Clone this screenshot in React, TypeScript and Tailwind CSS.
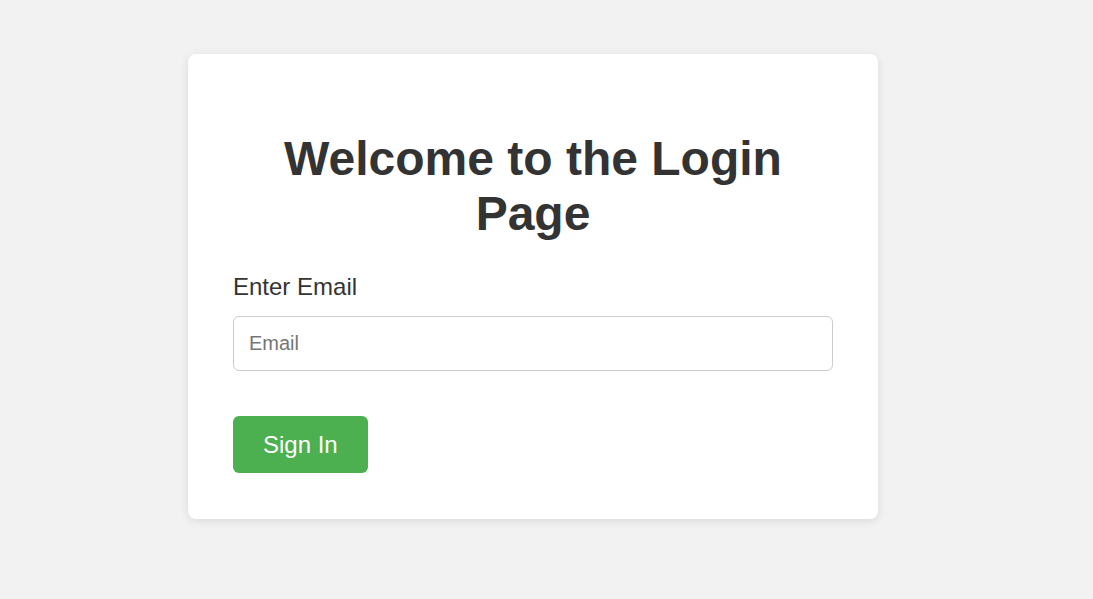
export default function App() {
  return (
    <div className="min-h-[599px] bg-[#f2f2f2] pt-[54px] font-['Liberation_Sans',Arial,sans-serif] text-[#333]">
      <div className="ml-[188px] w-[690px] rounded-lg bg-white px-[45px] pt-[45px] pb-[46px] shadow-[0_2px_10px_rgba(0,0,0,0.1)]">
        <h1 className="my-8 text-center text-[48px] font-bold leading-[55px]">
          Welcome to the Login Page
        </h1>

        <form onSubmit={(e) => e.preventDefault()}>
          <label htmlFor="email" className="mb-[15px] block text-[24px] leading-[28px]">
            Enter Email
          </label>
          <input
            id="email"
            type="email"
            placeholder="Email"
            className="block h-[55px] w-full rounded-md border border-[#ccc] px-[15px] text-[20px] placeholder:text-[#757575] outline-none"
          />

          <button
            type="submit"
            className="mt-[45px] block h-[57px] rounded-md bg-[#4caf50] px-[30px] text-[24px] text-white"
          >
            Sign In
          </button>
        </form>
      </div>
    </div>
  );
}
